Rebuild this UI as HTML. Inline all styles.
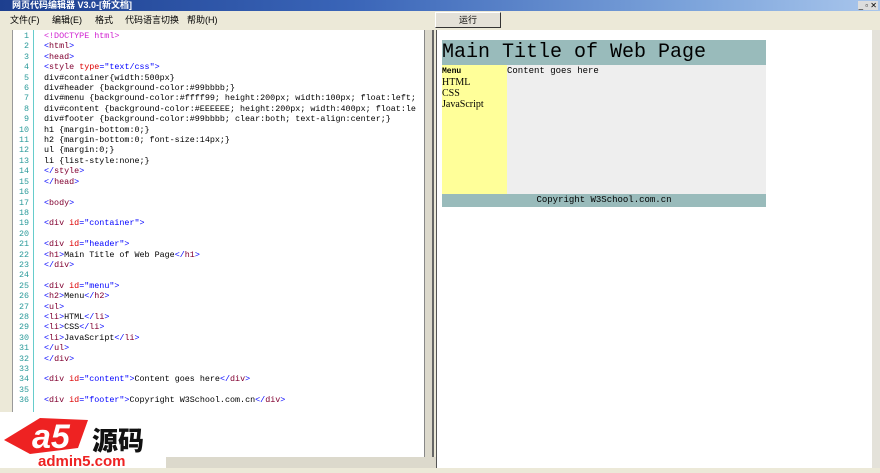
<!DOCTYPE html>
<html><head><meta charset="utf-8"><style>
*{margin:0;padding:0;box-sizing:border-box}
body{width:880px;height:468px;overflow:hidden;background:#ece9d8;font-family:"Liberation Sans","Noto Sans CJK SC",sans-serif;position:relative}
.title{position:absolute;left:0;top:0;width:880px;height:11px;background:linear-gradient(90deg,#1d3f8f,#3a65b8 40%,#7fa6dc 80%,#a9c6ec);color:#fff;font-size:9px;font-weight:bold;line-height:11px;padding-left:12px}
.menu{position:absolute;left:0;top:11px;width:880px;height:18px;background:#ece9d8;font-size:9px;line-height:18px}
.menu span{position:absolute;top:0}
.left{position:absolute;left:12px;top:30px;width:412px;height:427px;background:#fff;border-left:1px solid #999}
.gut{position:absolute;left:0;top:0;width:21px;height:100%;border-right:1px solid #6cc}
pre{position:absolute;font-family:"Liberation Mono",monospace;font-size:8.4px;line-height:10.4px;top:1px}
.ln{left:0;width:16px;text-align:right;color:#2a9a9a}
.code{left:31px;color:#000}
.b{color:#00f}.t{color:#800030}.a{color:#d00}.d{color:#d020d0}
.sb{position:absolute;left:424px;top:30px;width:10px;height:427px;background:#dcd9cc;border-left:1px solid #888;border-right:2px solid #666}
.hs{position:absolute;left:0;top:457px;width:436px;height:11px;background:#dcd9cc}
.right{position:absolute;left:436px;top:30px;width:444px;height:438px;background:#fff;border-left:1px solid #555}
.rsb{position:absolute;left:872px;top:30px;width:8px;height:438px;background:#e4e2da}
.run{position:absolute;left:435px;top:12px;width:66px;height:16px;background:#e4e1d8;border:1px solid #333;border-left-color:#fff;border-top-color:#fff;font-size:9px;text-align:center;line-height:14px}
.hd{position:absolute;left:442px;top:40px;width:324px;height:25px;background:#99bbbb;font-family:"Liberation Mono",monospace;font-size:20px;line-height:25px}
.mn{position:absolute;left:442px;top:65px;width:65px;height:129px;background:#ffff99;font-family:"Liberation Serif",serif;font-size:10px;line-height:11px}
.ct{position:absolute;left:507px;top:65px;width:259px;height:129px;background:#eee;font-family:"Liberation Mono",monospace;font-size:9px;line-height:12px}
.ft{position:absolute;left:442px;top:194px;width:324px;height:13px;background:#99bbbb;font-family:"Liberation Mono",monospace;font-size:9px;line-height:13px;text-align:center}
.logo{position:absolute;left:0;top:412px;width:166px;height:56px;background:#fff}
</style></head><body>
<div class="title">网页代码编辑器 V3.0-[新文档]</div>
<div style="position:absolute;right:2px;top:1px;font-size:8px;color:#000;background:#ddd;line-height:9px;padding:0 1px">_ ▫ ✕</div>
<div class="menu"><span style="left:10px">文件(F)</span><span style="left:52px">编辑(E)</span><span style="left:95px">格式</span><span style="left:125px">代码语言切换</span><span style="left:187px">帮助(H)</span></div>
<div class="run">运行</div>
<div class="left"><div class="gut"></div>
<pre class="ln">1
2
3
4
5
6
7
8
9
10
11
12
13
14
15
16
17
18
19
20
21
22
23
24
25
26
27
28
29
30
31
32
33
34
35
36</pre>
<pre class="code"><span class="d">&lt;!DOCTYPE html&gt;</span>
<span class="b">&lt;</span><span class="t">html</span><span class="b">&gt;</span>
<span class="b">&lt;</span><span class="t">head</span><span class="b">&gt;</span>
<span class="b">&lt;</span><span class="t">style</span> <span class="a">type</span><span class="b">="text/css"&gt;</span>
div#container{width:500px}
div#header {background-color:#99bbbb;}
div#menu {background-color:#ffff99; height:200px; width:100px; float:left;
div#content {background-color:#EEEEEE; height:200px; width:400px; float:le
div#footer {background-color:#99bbbb; clear:both; text-align:center;}
h1 {margin-bottom:0;}
h2 {margin-bottom:0; font-size:14px;}
ul {margin:0;}
li {list-style:none;}
<span class="b">&lt;/</span><span class="t">style</span><span class="b">&gt;</span>
<span class="b">&lt;/</span><span class="t">head</span><span class="b">&gt;</span>

<span class="b">&lt;</span><span class="t">body</span><span class="b">&gt;</span>

<span class="b">&lt;</span><span class="t">div</span> <span class="a">id</span><span class="b">="container"&gt;</span>

<span class="b">&lt;</span><span class="t">div</span> <span class="a">id</span><span class="b">="header"&gt;</span>
<span class="b">&lt;</span><span class="t">h1</span><span class="b">&gt;</span>Main Title of Web Page<span class="b">&lt;/</span><span class="t">h1</span><span class="b">&gt;</span>
<span class="b">&lt;/</span><span class="t">div</span><span class="b">&gt;</span>

<span class="b">&lt;</span><span class="t">div</span> <span class="a">id</span><span class="b">="menu"&gt;</span>
<span class="b">&lt;</span><span class="t">h2</span><span class="b">&gt;</span>Menu<span class="b">&lt;/</span><span class="t">h2</span><span class="b">&gt;</span>
<span class="b">&lt;</span><span class="t">ul</span><span class="b">&gt;</span>
<span class="b">&lt;</span><span class="t">li</span><span class="b">&gt;</span>HTML<span class="b">&lt;/</span><span class="t">li</span><span class="b">&gt;</span>
<span class="b">&lt;</span><span class="t">li</span><span class="b">&gt;</span>CSS<span class="b">&lt;/</span><span class="t">li</span><span class="b">&gt;</span>
<span class="b">&lt;</span><span class="t">li</span><span class="b">&gt;</span>JavaScript<span class="b">&lt;/</span><span class="t">li</span><span class="b">&gt;</span>
<span class="b">&lt;/</span><span class="t">ul</span><span class="b">&gt;</span>
<span class="b">&lt;/</span><span class="t">div</span><span class="b">&gt;</span>

<span class="b">&lt;</span><span class="t">div</span> <span class="a">id</span><span class="b">="content"&gt;</span>Content goes here<span class="b">&lt;/</span><span class="t">div</span><span class="b">&gt;</span>

<span class="b">&lt;</span><span class="t">div</span> <span class="a">id</span><span class="b">="footer"&gt;</span>Copyright W3School.com.cn<span class="b">&lt;/</span><span class="t">div</span><span class="b">&gt;</span></pre>
</div>
<div class="sb"></div>
<div class="hs"></div>
<div class="right"></div>
<div class="rsb"></div>
<div class="hd">Main Title of Web Page</div>
<div class="mn"><b style="font-family:'Liberation Mono',monospace;font-size:8px">Menu</b><br>HTML<br>CSS<br>JavaScript</div>
<div class="ct">Content goes here</div>
<div class="ft">Copyright W3School.com.cn</div>
<div class="logo">
<svg width="166" height="56" viewBox="0 0 166 56">
<path d="M4 28 L40 6 L88 8 L78 36 L30 42 Z" fill="#e22"/>
<text x="32" y="36" font-family="Liberation Sans" font-weight="bold" font-size="34" fill="#fff" font-style="italic">a5</text>
<text x="92" y="38" font-family="Noto Sans CJK SC,sans-serif" font-weight="900" font-size="26" fill="#111">源码</text>
<text x="38" y="54" font-family="Liberation Sans" font-weight="bold" font-size="15" fill="#e22">admin5.com</text>
</svg></div>
</body></html>
